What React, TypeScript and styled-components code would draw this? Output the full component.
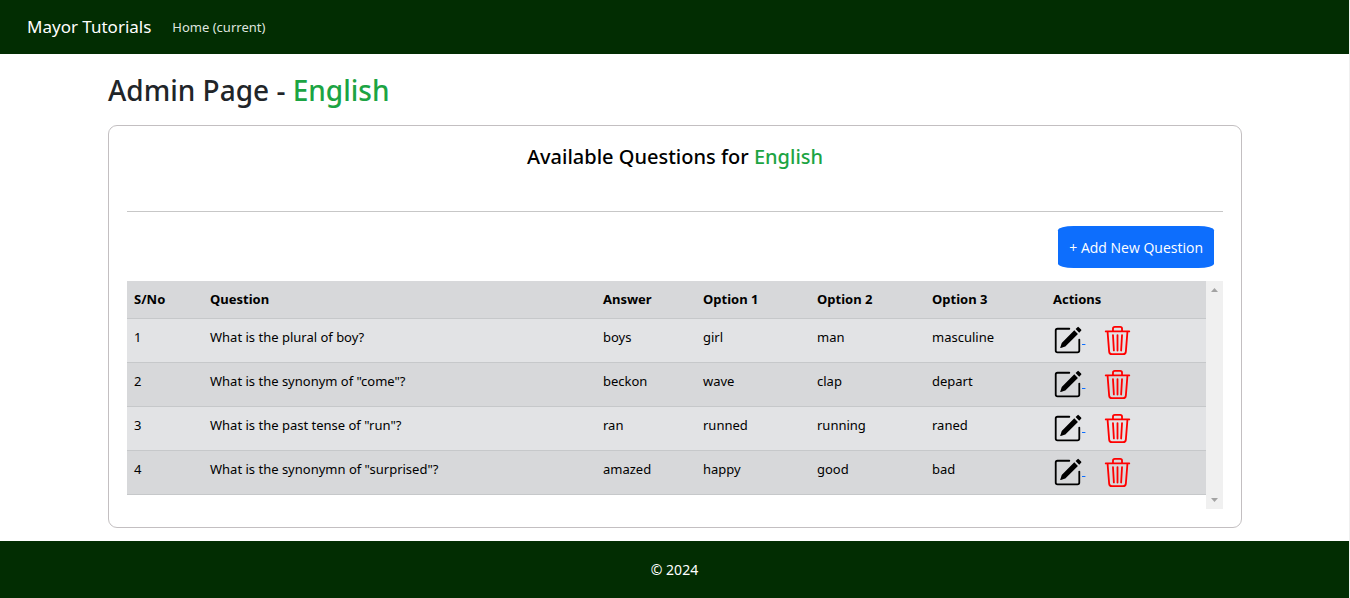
import React from 'react';
import styled, { createGlobalStyle } from 'styled-components';
import { BsPencilSquare, BsTrash3 } from 'react-icons/bs';

const GlobalStyle = createGlobalStyle`
  *, *::before, *::after { box-sizing: border-box; }
  body {
    margin: 0;
    background: #fff;
    color: #212529;
    font-family: 'Noto Sans', 'Open Sans', sans-serif;
    font-size: 14px;
    line-height: 22px;
  }
`;

const Page = styled.div`
  display: flex;
  flex-direction: column;
  min-height: 100vh;
  border-right: 1px solid #f0f0f0;
`;

const Navbar = styled.nav`
  display: flex;
  align-items: center;
  gap: 21px;
  height: 54px;
  padding: 0 27px;
  background: #022d02;
`;

const Brand = styled.a`
  color: #fff;
  font-size: 17px;
  text-decoration: none;
`;

const NavLink = styled.a`
  color: #dfe4df;
  font-size: 13px;
  text-decoration: none;
`;

const Main = styled.main`
  flex: 1;
  margin: 0 107px 0 108px;
  padding: 19px 0 13px;
`;

const PageTitle = styled.h1`
  margin: 0 0 18px;
  font-size: 28px;
  font-weight: 500;
  line-height: 34px;
`;

const Subject = styled.span`
  color: #1ca443;
`;

const Card = styled.section`
  padding: 18px;
  border: 1px solid #c3bfc1;
  border-radius: 9px;
`;

const CardTitle = styled.h2`
  margin: 0;
  color: #000;
  font-size: 20px;
  font-weight: 500;
  line-height: 26px;
  text-align: center;
`;

const Divider = styled.hr`
  margin: 41px 0 14px;
  border: 0;
  border-top: 1px solid #c7c7c7;
`;

const Toolbar = styled.div`
  display: flex;
  justify-content: flex-end;
  padding: 0 9px 13px;
`;

const AddButton = styled.button`
  height: 42px;
  padding: 0 11px;
  border: 0;
  border-radius: 10%;
  background: #0d6efd;
  color: #fff;
  font-family: 'Open Sans', sans-serif;
  font-size: 14px;
`;

const ScrollPane = styled.div`
  display: flex;
  height: 228px;
`;

const TableArea = styled.div`
  flex: 1;
  min-width: 0;
  overflow: hidden;
`;

const Table = styled.table`
  width: 100%;
  table-layout: fixed;
  border-collapse: collapse;
  color: #000;
  font-size: 13px;
  text-align: left;
`;

const Column = styled.col<{ $width?: number }>`
  width: ${({ $width }) => ($width ? `${$width}px` : 'auto')};
`;

const Row = styled.tr`
  height: 44px;
  background: #d7d8da;
  border-bottom: 1px solid #c6c8ca;

  tbody &:nth-child(odd) { background: #e2e3e5; }
  thead & { height: 37px; }
`;

const HeadCell = styled.th`
  padding: 7px;
  font-weight: 700;
  vertical-align: top;
`;

const Cell = styled.td`
  padding: 7px;
  vertical-align: top;
`;

const ActionCell = styled.td`
  padding: 0 7px;
`;

const Actions = styled.div`
  display: flex;
  align-items: center;
  gap: 18px;
`;

const EditLink = styled.a`
  color: #0d6efd;

  svg {
    color: #000;
    vertical-align: middle;
  }
`;

const DeleteButton = styled.button`
  display: flex;
  padding: 0;
  border: 0;
  background: none;
  color: #f00;
`;

const ScrollTrack = styled.div`
  display: flex;
  flex-direction: column;
  align-items: center;
  justify-content: space-between;
  width: 17px;
  padding: 7px 0;
  background: #f0f0f0;
`;

const Footer = styled.footer`
  display: flex;
  align-items: center;
  justify-content: center;
  height: 57px;
  background: #022d02;
  color: #fff;
  font-size: 14px;
`;

const questions = [
  { text: 'What is the plural of boy?', answer: 'boys', options: ['girl', 'man', 'masculine'] },
  { text: 'What is the synonym of "come"?', answer: 'beckon', options: ['wave', 'clap', 'depart'] },
  { text: 'What is the past tense of "run"?', answer: 'ran', options: ['runned', 'running', 'raned'] },
  { text: 'What is the synonymn of "surprised"?', answer: 'amazed', options: ['happy', 'good', 'bad'] },
];

const headings = ['S/No', 'Question', 'Answer', 'Option 1', 'Option 2', 'Option 3', 'Actions'];
const columnWidths = [76, undefined, 100, 114, 115, 121, 160];

export default function App() {
  return (
    <>
      <GlobalStyle />
      <Page>
        <Navbar>
          <Brand href="#">Mayor Tutorials</Brand>
          <NavLink href="#" aria-current="page">Home (current)</NavLink>
        </Navbar>
        <Main>
          <PageTitle>Admin Page - <Subject>English</Subject></PageTitle>
          <Card>
            <CardTitle>Available Questions for <Subject>English</Subject></CardTitle>
            <Divider />
            <Toolbar>
              <AddButton type="button">+ Add New Question</AddButton>
            </Toolbar>
            <ScrollPane>
              <TableArea>
                <Table>
                  <colgroup>
                    {columnWidths.map((width, i) => <Column key={headings[i]} $width={width} />)}
                  </colgroup>
                  <thead>
                    <Row>
                      {headings.map((heading) => <HeadCell key={heading} scope="col">{heading}</HeadCell>)}
                    </Row>
                  </thead>
                  <tbody>
                    {questions.map((question, i) => (
                      <Row key={question.text}>
                        <Cell>{i + 1}</Cell>
                        <Cell>{question.text}</Cell>
                        <Cell>{question.answer}</Cell>
                        {question.options.map((option) => <Cell key={option}>{option}</Cell>)}
                        <ActionCell>
                          <Actions>
                            <EditLink href="#" aria-label="Edit question">
                              <BsPencilSquare size={29} />&nbsp;
                            </EditLink>
                            <DeleteButton type="button" aria-label="Delete question">
                              <BsTrash3 size={29} />
                            </DeleteButton>
                          </Actions>
                        </ActionCell>
                      </Row>
                    ))}
                  </tbody>
                </Table>
              </TableArea>
              <ScrollTrack aria-hidden="true">
                <svg width="7" height="4" viewBox="0 0 7 4"><path d="M0 4 3.5 0 7 4z" fill="#a3a3a3" /></svg>
                <svg width="7" height="4" viewBox="0 0 7 4"><path d="M0 0 3.5 4 7 0z" fill="#a3a3a3" /></svg>
              </ScrollTrack>
            </ScrollPane>
          </Card>
        </Main>
        <Footer>© 2024</Footer>
      </Page>
    </>
  );
}
